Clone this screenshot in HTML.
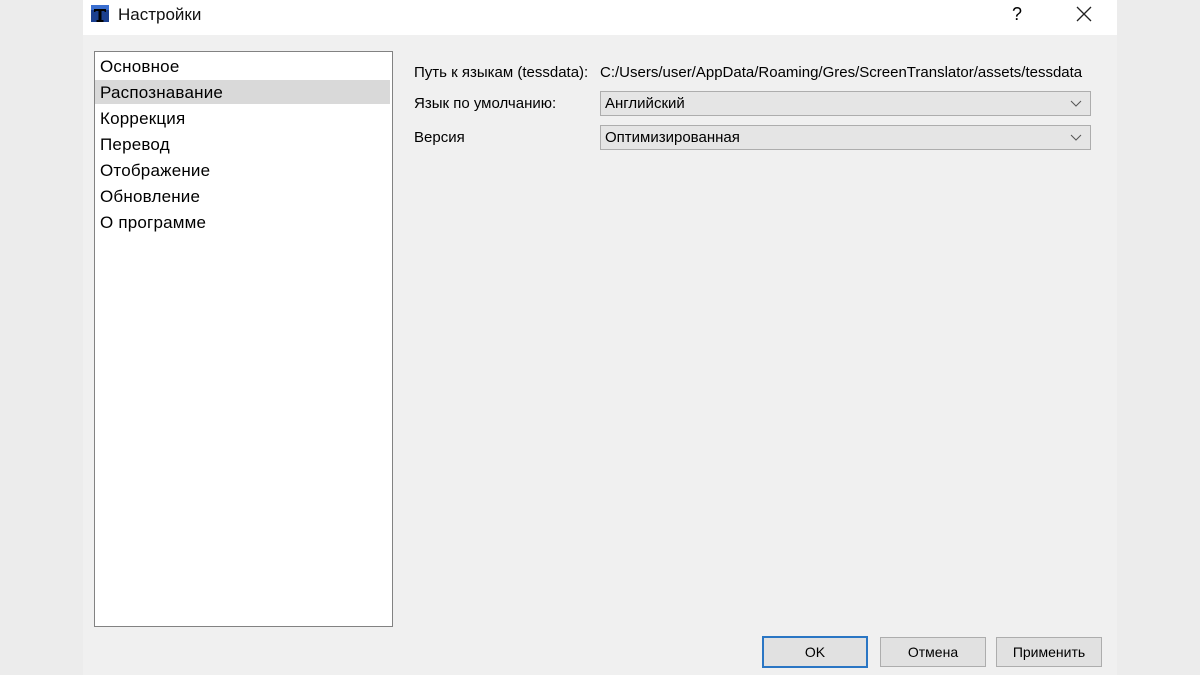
<!DOCTYPE html>
<html><head><meta charset="utf-8"><style>
body{margin:0;width:1200px;height:675px;background:#ececec;position:relative;overflow:hidden;font-family:"Liberation Sans",sans-serif;color:#000}
.win{position:absolute;left:83px;top:0;width:1034px;height:675px;background:#f0f0f0}
.title{position:absolute;left:0;top:0;width:1034px;height:35px;background:#fff}
.abs{position:absolute;white-space:nowrap}
.list{position:absolute;left:11px;top:51px;width:297px;height:574px;background:#fff;border:1px solid #828282}
.it{position:absolute;left:0;width:295px;height:26px;font-size:17px;line-height:26px;padding-left:5px;box-sizing:border-box;letter-spacing:0.2px}
.lbl{font-size:15px}
.combo{position:absolute;left:517px;width:485px;height:23px;background:#e5e5e5;border:1px solid #adadad;font-size:15px;line-height:23px;padding-left:4px;box-sizing:content-box}
.btn{position:absolute;top:637px;width:104px;height:28px;background:#e1e1e1;border:1px solid #adadad;font-size:14px;line-height:28px;text-align:center}
</style></head><body>
<div class="win">
<div class="title">
<svg class="abs" style="left:7px;top:4px" width="20" height="20" viewBox="0 0 20 20"><rect x="1" y="1" width="18" height="17" fill="#1b3f8f"/><rect x="1" y="1" width="18" height="5" fill="#3a6fd0"/><path d="M4 5h12v3h-1.5V7H11.5v9h2v2h-7v-2h2V7H5.5v1H4z" fill="#000"/></svg>
<div class="abs" style="left:35px;top:5px;font-size:17px;color:#111">Настройки</div>
<div class="abs" style="left:929px;top:4px;font-size:18px">?</div>
<svg class="abs" style="left:993px;top:6px" width="16" height="16"><path d="M1 1L15 15M15 1L1 15" stroke="#222" stroke-width="1.3"/></svg>
</div>
<div class="list">
<div class="it" style="top:2px">Основное</div>
<div class="it" style="top:28px;background:#d9d9d9;height:24px">Распознавание</div>
<div class="it" style="top:54px">Коррекция</div>
<div class="it" style="top:80px">Перевод</div>
<div class="it" style="top:106px">Отображение</div>
<div class="it" style="top:132px">Обновление</div>
<div class="it" style="top:158px">О программе</div>
</div>
<div class="abs lbl" style="left:331px;top:64px">Путь к языкам (tessdata):</div>
<div class="abs lbl" style="left:517px;top:64px">C:/Users/user/AppData/Roaming/Gres/ScreenTranslator/assets/tessdata</div>
<div class="abs lbl" style="left:331px;top:95px">Язык по умолчанию:</div>
<div class="abs lbl" style="left:331px;top:129px">Версия</div>
<div class="combo" style="top:91px">Английский<svg class="abs" style="right:8px;top:8px" width="12" height="8"><path d="M1 1L6 6L11 1" stroke="#555" fill="none"/></svg></div>
<div class="combo" style="top:125px">Оптимизированная<svg class="abs" style="right:8px;top:8px" width="12" height="8"><path d="M1 1L6 6L11 1" stroke="#555" fill="none"/></svg></div>
<div class="btn" style="left:679px;border:2px solid #2a76c4;top:636px;width:102px">OK</div>
<div class="btn" style="left:797px">Отмена</div>
<div class="btn" style="left:913px">Применить</div>
</div>
</body></html>
